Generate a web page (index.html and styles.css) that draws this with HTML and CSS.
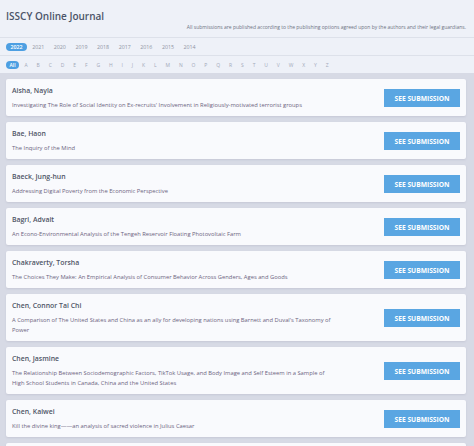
FILE: index.html
```html
<!DOCTYPE html>
<html>
<head>
<meta charset="utf-8">
<link rel="stylesheet" href="styles.css">
</head>
<body>
<header class="header">
  <div class="brand">
    <h1 class="title">ISSCY Online Journal</h1>
    <p class="note">All submissions are published according to the publishing options agreed upon by the authors and their legal guardians.</p>
  </div>
  <nav class="years">
    <span class="pill active">2022</span>
    <span class="pill">2021</span>
    <span class="pill">2020</span>
    <span class="pill">2019</span>
    <span class="pill">2018</span>
    <span class="pill">2017</span>
    <span class="pill">2016</span>
    <span class="pill">2015</span>
    <span class="pill">2014</span>
  </nav>
  <nav class="letters">
    <span class="pill active">All</span>
    <span class="pill">A</span><span class="pill">B</span><span class="pill">C</span><span class="pill">D</span><span class="pill">E</span><span class="pill">F</span><span class="pill">G</span><span class="pill">H</span><span class="pill">I</span><span class="pill">J</span><span class="pill">K</span><span class="pill">L</span><span class="pill">M</span><span class="pill">N</span><span class="pill">O</span><span class="pill">P</span><span class="pill">Q</span><span class="pill">R</span><span class="pill">S</span><span class="pill">T</span><span class="pill">U</span><span class="pill">V</span><span class="pill">W</span><span class="pill">X</span><span class="pill">Y</span><span class="pill">Z</span>
  </nav>
</header>
<main class="list">
  <article class="card">
    <div class="info"><h2 class="name">Aisha, Nayla</h2><p class="paper">Investigating The Role of Social Identity on Ex-recruits' Involvement in Religiously-motivated terrorist groups</p></div>
    <a class="btn">SEE SUBMISSION</a>
  </article>
  <article class="card">
    <div class="info"><h2 class="name">Bae, Haon</h2><p class="paper">The Inquiry of the Mind</p></div>
    <a class="btn">SEE SUBMISSION</a>
  </article>
  <article class="card">
    <div class="info"><h2 class="name">Baeck, Jung-hun</h2><p class="paper">Addressing Digital Poverty from the Economic Perspective</p></div>
    <a class="btn">SEE SUBMISSION</a>
  </article>
  <article class="card">
    <div class="info"><h2 class="name">Bagri, Advait</h2><p class="paper">An Econo-Environmental Analysis of the Tengeh Reservoir Floating Photovoltaic Farm</p></div>
    <a class="btn">SEE SUBMISSION</a>
  </article>
  <article class="card">
    <div class="info"><h2 class="name">Chakraverty, Torsha</h2><p class="paper">The Choices They Make: An Empirical Analysis of Consumer Behavior Across Genders, Ages and Goods</p></div>
    <a class="btn">SEE SUBMISSION</a>
  </article>
  <article class="card">
    <div class="info"><h2 class="name">Chen, Connor Tai Chi</h2><p class="paper">A Comparison of The United States and China as an ally for developing nations using Barnett and Duval's Taxonomy of Power</p></div>
    <a class="btn">SEE SUBMISSION</a>
  </article>
  <article class="card">
    <div class="info"><h2 class="name">Chen, Jasmine</h2><p class="paper">The Relationship Between Sociodemographic Factors, TikTok Usage, and Body Image and Self Esteem in a Sample of High School Students in Canada, China and the United States</p></div>
    <a class="btn">SEE SUBMISSION</a>
  </article>
  <article class="card">
    <div class="info"><h2 class="name">Chen, Kaiwei</h2><p class="paper">Kill the divine king——an analysis of sacred violence in Julius Caesar</p></div>
    <a class="btn">SEE SUBMISSION</a>
  </article>
  <article class="card card-peek"></article>
</main>
</body>
</html>
```
FILE: styles.css
```css
html, body {
  margin: 0;
  padding: 0;
}
body {
  background: #d7dae5;
  font-family: "Open Sans", "Liberation Sans", sans-serif;
  height: 446px;
  overflow: hidden;
}
.header {
  background: #eef1f8;
}
.brand {
  height: 38px;
  box-sizing: border-box;
  padding: 9px 8px 0 6px;
  border-bottom: 1px solid #dde1ea;
}
.title {
  margin: 0;
  font-size: 10px;
  line-height: 14px;
  font-weight: 600;
  color: #4b5468;
}
.note {
  margin: 1px 0 0;
  text-align: right;
  font-size: 5px;
  line-height: 7px;
  color: #6d7282;
}
.years, .letters {
  display: flex;
  align-items: center;
  padding: 0 6px;
  box-sizing: border-box;
}
.years {
  height: 18px;
  gap: 0.5px;
  border-bottom: 1px solid #dde1ea;
}
.letters {
  height: 17px;
  gap: 1.9px;
}
.pill {
  font-size: 5.3px;
  line-height: 8px;
  color: #9aa0ae;
  border-radius: 4px;
}
.years .pill {
  padding: 0 4.5px;
  color: #8e94a3;
}
.letters .pill {
  font-size: 5px;
  padding: 0 3.5px;
  color: #a3a9b8;
}
.pill.active {
  background: #4d9fe2;
  color: #ffffff;
  font-weight: 600;
}
.list {
  display: flex;
  flex-direction: column;
  gap: 6px;
  padding: 6px 8px 0 6px;
}
.card {
  display: flex;
  align-items: center;
  justify-content: space-between;
  background: #f9fafd;
  border-radius: 2px;
  box-shadow: 0 1px 2px rgba(120, 126, 150, 0.18);
  padding: 7px 6px 6px 6px;
}
.card-peek {
  height: 24px;
  flex-shrink: 0;
}
.info {
  width: 322px;
}
.name {
  margin: 0;
  font-size: 6.9px;
  line-height: 9px;
  font-weight: 600;
  color: #4f5566;
}
.paper {
  margin: 5px 0 0;
  font-size: 5.8px;
  line-height: 10px;
  color: #6c6480;
}
.btn {
  display: flex;
  align-items: center;
  justify-content: center;
  width: 76px;
  height: 18px;
  background: #5aa6e2;
  color: #ffffff;
  font-size: 6.7px;
  font-weight: 700;
}
```
